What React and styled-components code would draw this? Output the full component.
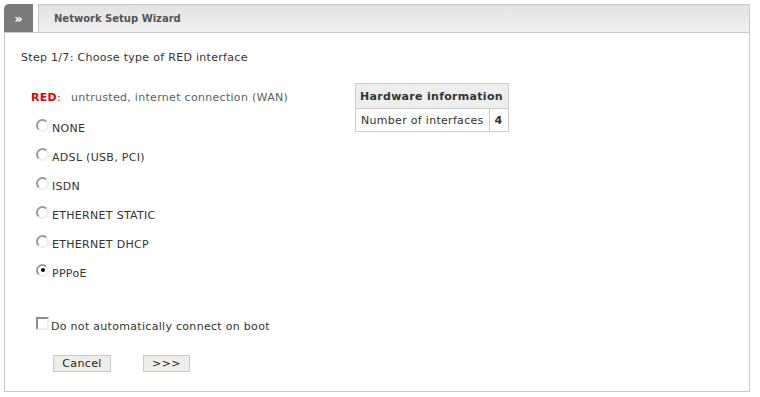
import React, { useState } from "react";
import styled, { createGlobalStyle } from "styled-components";

const GlobalStyle = createGlobalStyle`
  body {
    margin: 0;
    background: #ffffff;
    font-family: "DejaVu Sans", Verdana, sans-serif;
    font-size: 11px;
    letter-spacing: 0.3px;
    color: #333333;
  }
`;

const OPTIONS = [
  "NONE",
  "ADSL (USB, PCI)",
  "ISDN",
  "ETHERNET STATIC",
  "ETHERNET DHCP",
  "PPPoE",
];

const App = () => {
  const [selected, setSelected] = useState("PPPoE");
  const [noConnect, setNoConnect] = useState(false);

  return (
    <Page>
      <GlobalStyle />
      <Header>
        <Tab>»</Tab>
        <HeaderBar>Network Setup Wizard</HeaderBar>
      </Header>
      <Panel>
        <StepTitle>Step 1/7: Choose type of RED interface</StepTitle>
        <Columns>
          <LeftColumn>
            <ZoneLine>
              <ZoneName>RED</ZoneName>:
              <ZoneDesc>untrusted, internet connection (WAN)</ZoneDesc>
            </ZoneLine>
            <OptionList>
              {OPTIONS.map((opt) => (
                <Option key={opt} onClick={() => setSelected(opt)}>
                  <Radio checked={selected === opt} />
                  <span>{opt}</span>
                </Option>
              ))}
            </OptionList>
            <CheckRow onClick={() => setNoConnect((v) => !v)}>
              <CheckBox checked={noConnect} />
              <span>Do not automatically connect on boot</span>
            </CheckRow>
            <Buttons>
              <Button width={58}>Cancel</Button>
              <Button width={47}>&gt;&gt;&gt;</Button>
            </Buttons>
          </LeftColumn>
          <InfoTable>
            <thead>
              <tr>
                <Th colSpan={2}>Hardware information</Th>
              </tr>
            </thead>
            <tbody>
              <tr>
                <Td>Number of interfaces</Td>
                <Td bold>4</Td>
              </tr>
            </tbody>
          </InfoTable>
        </Columns>
      </Panel>
    </Page>
  );
};

export default App;

const Page = styled.div`
  padding: 4px;
  width: 746px;
`;

const Header = styled.div`
  display: flex;
  height: 29px;
  border-bottom: 1px solid #c8c8c8;
  box-sizing: border-box;
`;

const Tab = styled.div`
  width: 29px;
  height: 28px;
  background: #7a7a7a;
  border-top-left-radius: 5px;
  color: #ffffff;
  font-weight: bold;
  font-size: 13px;
  letter-spacing: 0;
  display: flex;
  align-items: center;
  justify-content: center;
  margin-right: 5px;
`;

const HeaderBar = styled.div`
  flex: 1;
  height: 28px;
  box-sizing: border-box;
  border: 1px solid #c8c8c8;
  border-bottom: none;
  background: linear-gradient(#e2e2e2, #f1f1f1);
  color: #555555;
  font-weight: bold;
  font-size: 10px;
  letter-spacing: 0;
  display: flex;
  align-items: center;
  padding-left: 15px;
`;

const Panel = styled.div`
  border: 1px solid #c8c8c8;
  border-top: none;
  padding: 18px 16px 18px 16px;
  height: 359px;
  box-sizing: border-box;
`;

const StepTitle = styled.div`
  line-height: 14px;
`;

const Columns = styled.div`
  display: flex;
  margin-top: 18px;
`;

const LeftColumn = styled.div`
  width: 334px;
  padding-top: 8px;
`;

const ZoneLine = styled.div`
  line-height: 14px;
  padding-left: 10px;
`;

const ZoneName = styled.span`
  color: #e00000;
  font-weight: bold;
`;

const ZoneDesc = styled.span`
  color: #5a5f66;
  margin-left: 10px;
`;

const OptionList = styled.div`
  display: flex;
  flex-direction: column;
  gap: 13px;
  margin-top: 15px;
  padding-left: 15px;
`;

const Option = styled.div`
  display: flex;
  align-items: center;
  height: 16px;
  gap: 3px;
  cursor: pointer;
`;

const Radio = styled.span`
  position: relative;
  width: 13px;
  height: 13px;
  box-sizing: border-box;
  border-radius: 50%;
  border: 2px solid;
  border-color: #999999 #eeeeee #eeeeee #999999;
  background: #ffffff;
  margin-top: -6px;
  &::after {
    content: "";
    display: ${(p) => (p.checked ? "block" : "none")};
    position: absolute;
    left: 2.5px;
    top: 2.5px;
    width: 4px;
    height: 4px;
    border-radius: 50%;
    background: #000000;
  }
`;

const CheckRow = styled.div`
  display: flex;
  align-items: center;
  height: 16px;
  gap: 2px;
  margin-top: 37px;
  padding-left: 15px;
  cursor: pointer;
`;

const CheckBox = styled.span`
  width: 13px;
  height: 13px;
  box-sizing: border-box;
  border: 2px solid;
  border-color: #8c8c8c #eeeeee #eeeeee #8c8c8c;
  background: #ffffff;
  margin-top: -6px;
  position: relative;
  &::after {
    content: "✓";
    display: ${(p) => (p.checked ? "block" : "none")};
    position: absolute;
    left: 0;
    top: -3px;
    font-size: 9px;
  }
`;

const Buttons = styled.div`
  display: flex;
  gap: 32px;
  margin-top: 21px;
  padding-left: 32px;
`;

const Button = styled.button`
  height: 17px;
  width: ${(p) => p.width}px;
  padding: 0;
  background: #efedea;
  border: 1px solid #c8c8c8;
  font-family: "DejaVu Sans", Verdana, sans-serif;
  font-size: 11px;
  letter-spacing: 0.4px;
  color: #222222;
  line-height: 15px;
`;

const InfoTable = styled.table`
  border-collapse: collapse;
  align-self: flex-start;
  width: 153px;
`;

const Th = styled.th`
  background: #eeeeee;
  border: 1px solid #cccccc;
  height: 24px;
  padding: 0 4px;
  text-align: left;
  font-weight: bold;
  color: #333333;
  white-space: nowrap;
`;

const Td = styled.td`
  border: 1px solid #cccccc;
  height: 22px;
  padding: 0 5px;
  white-space: nowrap;
  font-weight: ${(p) => (p.bold ? "bold" : "normal")};
  text-align: ${(p) => (p.bold ? "center" : "left")};
`;
